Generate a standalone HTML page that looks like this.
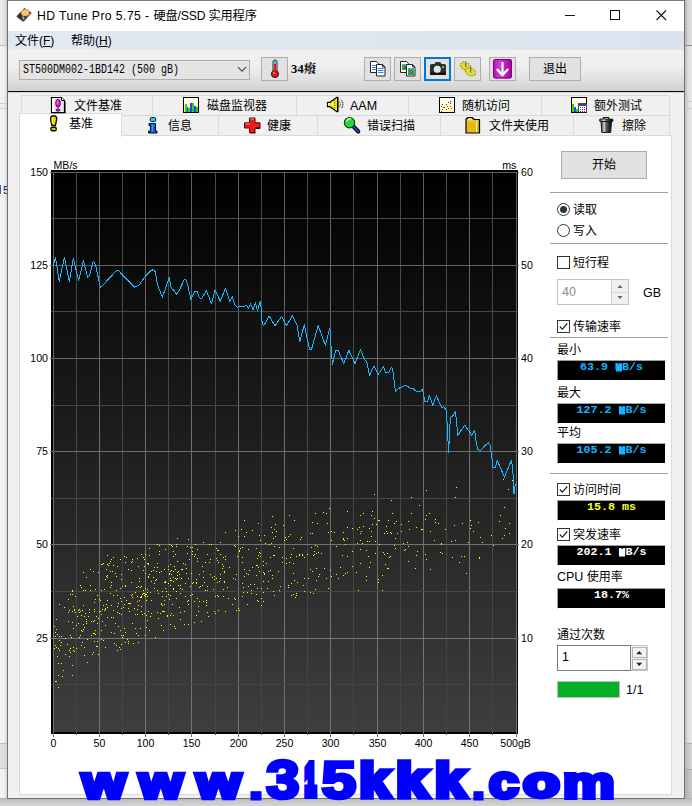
<!DOCTYPE html>
<html lang="zh-CN">
<head>
<meta charset="utf-8">
<title>HD Tune Pro 5.75 - 硬盘/SSD 实用程序</title>
<style>
html,body{margin:0;padding:0;}
body{width:692px;height:806px;overflow:hidden;position:relative;background:#f0f0f0;
  font-family:"Liberation Sans","Noto Sans CJK SC",sans-serif;font-size:12px;color:#000;}
.abs{position:absolute;}
.t{position:absolute;white-space:nowrap;line-height:16px;height:16px;}
/* desktop behind */
#bgL{left:0;top:0;width:8px;height:806px;background:linear-gradient(90deg,#f3f3f3 0,#f0f0f0 4px,#d6d6d6 7px);}
#bgLtop{left:0;top:0;width:8px;height:45px;background:linear-gradient(90deg,#ededed 0,#e6e6e6 4px,#cacaca 7px);border-bottom:1px solid #bdbdbd;}
#bgR{left:685px;top:0;width:7px;height:806px;background:linear-gradient(90deg,#bcbcbc 0,#dcdcdc 3px,#eaeaea 7px);}
#bgRtop{left:685px;top:0;width:7px;height:45px;background:linear-gradient(90deg,#b4b4b4 0,#d2d2d2 3px,#e2e2e2 7px);border-bottom:1px solid #8e8e8e;}
#bgB{left:0;top:798px;width:692px;height:8px;background:linear-gradient(180deg,#b2b2b2 0,#c6c6c6 3px,#d4d4d4 8px);}
/* window */
#win{left:7px;top:0;width:676px;height:797px;border:1px solid #707070;border-top-color:#7a7a7a;background:#f0f0f0;}
#title{left:8px;top:1px;width:676px;height:30px;background:#fff;}
#menu{left:8px;top:31px;width:676px;height:19px;background:linear-gradient(90deg,#e3e9f2,#dbe3ee);}
#tool{left:8px;top:50px;width:676px;height:41px;background:linear-gradient(180deg,#f1f1f1 0,#eeeeee 40%,#dcdcdc 80%,#d0d0d0 100%);}
#toolline{left:8px;top:91px;width:676px;height:1px;background:#0a0a0a;}
#toolline2{left:8px;top:92px;width:676px;height:1px;background:#b9b9b9;opacity:.55}
.btn{position:absolute;box-sizing:border-box;border:1px solid #adadad;background:#e1e1e1;}
#panel{left:19px;top:135px;width:651px;height:658px;background:#fff;border:1px solid #dadada;box-sizing:content-box;}
.tab{position:absolute;box-sizing:border-box;border:1px solid #d9d9d9;border-bottom:none;background:#f0f0f0;}
.sep{position:absolute;height:1px;background:#a0a0a0;left:550px;width:118px;}
.lcd{position:absolute;left:557px;width:109px;height:21px;box-sizing:border-box;border:1px solid #fff;border-top-color:#a0a0a0;border-left-color:#a0a0a0;background:#000;text-align:center;
  font-family:"Liberation Mono","DejaVu Sans Mono",monospace;font-weight:bold;font-size:11.7px;line-height:13px;letter-spacing:0;white-space:nowrap;}
.cb{position:absolute;box-sizing:border-box;width:13px;height:13px;border:1px solid #333;background:#fff;}
.rad{position:absolute;box-sizing:border-box;width:13px;height:13px;border:1px solid #333;border-radius:50%;background:#fff;}
svg text{font-family:"Liberation Sans",sans-serif;}
.mb{background:linear-gradient(currentColor,currentColor) no-repeat 0.5px 3.5px / 6px 7.5px;}
</style>
</head>
<body>
<div class="abs" id="bgL"></div>
<div class="abs" id="bgLtop"></div>
<div class="abs" style="left:0;top:743px;width:7px;height:26px;background:linear-gradient(90deg,#e2e2e2,#d4d4d4);border-top:1px solid #c0c0c0;border-bottom:1px solid #c4c4c4;box-sizing:border-box"></div>
<div class="abs" style="left:0;top:103px;width:7px;height:1px;background:#d0d0d0"></div>
<div class="abs" style="left:0;top:108px;width:7px;height:1px;background:#d0d0d0"></div>
<div class="abs" style="left:0;top:185px;width:1px;height:9px;background:#1a6fd0"></div>
<div class="t" style="left:3px;top:182px;font-size:11px;color:#222;width:4px;overflow:hidden">5</div>
<div class="abs" id="bgR"></div>
<div class="abs" id="bgRtop"></div>
<div class="abs" style="left:685px;top:101px;width:7px;height:1px;background:#cccccc"></div>
<div class="abs" style="left:685px;top:108px;width:7px;height:1px;background:#cccccc"></div>
<div class="abs" style="left:685px;top:743px;width:7px;height:26px;background:linear-gradient(90deg,#b8b8b8,#dadada);border-top:1px solid #b0b0b0;box-sizing:border-box"></div>
<div class="abs" style="left:685px;top:769px;width:7px;height:37px;background:linear-gradient(90deg,#b0b0b0,#cccccc);border-top:1px solid #a8a8a8;box-sizing:border-box"></div>
<div class="abs" id="bgB"></div>
<div class="abs" id="win"></div>
<div class="abs" id="title"></div>
<div class="abs" id="menu"></div>
<div class="abs" id="tool"></div>
<div class="abs" id="toolline"></div>
<div class="abs" id="toolline2"></div>

<!-- title bar -->
<svg class="abs" style="left:15px;top:7px" width="18" height="18" viewBox="0 0 18 18">
 <polygon points="1.700,9 9.500,1 16.300,5.500 8.500,14" fill="#2e2e30"/>
 <polygon points="1.700,9 8.500,14 8.500,15 1.700,10" fill="#18181a"/>
 <polygon points="8.500,14 16.300,5.500 16.300,6.500 8.500,15" fill="#48484a"/>
 <ellipse cx="10.300" cy="5.700" rx="4.300" ry="3.500" fill="#f0a838" transform="rotate(-10 10.300 5.700)"/>
 <ellipse cx="10.300" cy="5.700" rx="2.800" ry="2.200" fill="#fad488" transform="rotate(-10 10.300 5.700)"/>
 <ellipse cx="10.300" cy="5.700" rx="1.200" ry="1" fill="#b8bcc8"/>
 <path d="M7.500 9.500 L9 12.300" stroke="#a8a8a8" stroke-width="1.600"/>
</svg>
<div class="t" style="left:37px;top:8px;font-size:12.2px;letter-spacing:0.1px"><span style="letter-spacing:0.42px">HD Tune Pro 5.75 - </span><span style="letter-spacing:-0.15px">硬盘/SSD 实用程序</span></div>
<svg class="abs" style="left:560px;top:5px" width="112" height="22" viewBox="0 0 112 22" shape-rendering="crispEdges">
 <rect x="5" y="10" width="10" height="1" fill="#111"/>
 <rect x="50.5" y="5.5" width="9" height="9" fill="none" stroke="#111" stroke-width="1"/>
 <path d="M96.5 5.5 L106 15 M106 5.5 L96.5 15" stroke="#111" stroke-width="1.1" shape-rendering="geometricPrecision"/>
</svg>
<!-- menu -->
<div class="t" style="left:15px;top:33px;">文件(<span style="text-decoration:underline">F</span>)</div>
<div class="t" style="left:71px;top:33px;">帮助(<span style="text-decoration:underline">H</span>)</div>

<!-- toolbar -->
<div class="btn" style="left:19px;top:60px;width:231px;height:20px;background:#e4e4e4;"></div>
<div class="t" style="left:23px;top:62px;font-family:'Liberation Mono','DejaVu Sans Mono',monospace;font-size:12px;transform:scaleX(0.8333);transform-origin:0 0;">ST500DM002-1BD142 (500 gB)</div>
<svg class="abs" style="left:236.5px;top:66px" width="10" height="7" viewBox="0 0 10 7"><path d="M1 1.2 L5 5.2 L9 1.2" fill="none" stroke="#444" stroke-width="1.1"/></svg>
<div class="btn" style="left:261px;top:57px;width:27px;height:24px;"></div>
<svg class="abs" style="left:268px;top:59px" width="14" height="20" viewBox="0 0 14 20">
 <rect x="5" y="1" width="4" height="12" rx="2" fill="#e8e8e8" stroke="#222" stroke-width="1"/>
 <rect x="6" y="2" width="2" height="3" fill="#30c8e8"/>
 <rect x="6" y="5" width="2" height="9" fill="#e81010"/>
 <circle cx="7" cy="15" r="3.6" fill="#e81010" stroke="#222" stroke-width="1"/>
 <rect x="6" y="11" width="2" height="3" fill="#e81010"/>
 <circle cx="6" cy="14" r="0.9" fill="#ff9090"/>
</svg>
<div class="t" style="left:291px;top:61px;font-family:'Liberation Serif','Noto Serif CJK SC',serif;font-weight:bold;font-size:12.5px;letter-spacing:0.3px">34<span style="font-size:12px;letter-spacing:0">癈</span></div>

<div class="btn" style="left:364px;top:57px;width:27px;height:24px;"></div>
<div class="btn" style="left:394px;top:57px;width:27px;height:24px;"></div>
<div class="btn" style="left:424px;top:57px;width:27px;height:24px;border:2px solid #0078d7;"></div>
<div class="btn" style="left:454px;top:57px;width:27px;height:24px;"></div>
<div class="btn" style="left:489px;top:57px;width:27px;height:24px;"></div>
<div class="btn" style="left:529px;top:57px;width:52px;height:24px;"></div>
<div class="t" style="left:529px;top:61px;width:52px;text-align:center;font-size:12px">退出</div>
<!-- icon copy text -->
<svg class="abs" style="left:369px;top:60px" width="18" height="18" viewBox="0 0 18 18">
 <path d="M1.5 1.5 h6 l2 2 v9 h-8z" fill="#fff" stroke="#222" stroke-width="1"/>
 <path d="M3 5.5h5M3 7.5h5M3 9.5h5" stroke="#2a7fff" stroke-width="1"/>
 <path d="M7.5 4.500 h6 l2.5 2.500 v9 h-8.500z" fill="#fff" stroke="#222" stroke-width="1"/>
 <path d="M13.500 4.500 v2.500 h2.500" fill="none" stroke="#222" stroke-width="1"/>
 <path d="M9 8.500h5.500M9 10.500h5.500M9 12.500h5.500" stroke="#2a7fff" stroke-width="1"/>
</svg>
<!-- icon copy image -->
<svg class="abs" style="left:399px;top:60px" width="18" height="18" viewBox="0 0 18 18">
 <path d="M1.5 1.500 h6 l2 2 v9 h-8z" fill="#fff" stroke="#222" stroke-width="1"/>
 <rect x="3" y="4" width="5" height="6" fill="#20b040"/><rect x="3" y="4" width="5" height="1.5" fill="#20c8f0"/><circle cx="5.500" cy="7.500" r="1.300" fill="#e82020"/>
 <path d="M7.500 4.500 h6 l2.500 2.500 v9 h-8.500z" fill="#fff" stroke="#222" stroke-width="1"/>
 <path d="M13.500 4.500 v2.500 h2.500" fill="none" stroke="#222" stroke-width="1"/>
 <rect x="9" y="8" width="6" height="7" fill="#20b040"/><rect x="9" y="8" width="6" height="1.500" fill="#20c8f0"/><circle cx="12" cy="11.800" r="1.600" fill="#e82020"/><circle cx="12" cy="11.800" r="0.600" fill="#f0e020"/>
</svg>
<!-- icon camera -->
<svg class="abs" style="left:429px;top:61px" width="18" height="16" viewBox="0 0 18 16">
 <path d="M5.5 3 l1.300-2 h4.400 l1.300 2z" fill="#333"/>
 <rect x="1" y="3" width="16" height="11" rx="1.500" fill="#2e2e2e"/>
 <rect x="1" y="11.500" width="16" height="2.500" rx="1" fill="#111"/>
 <circle cx="8.300" cy="8.300" r="3.500" fill="#fff"/>
 <circle cx="8.300" cy="8.300" r="2.300" fill="#e8e8e8" stroke="#c8c8c8" stroke-width="0.600"/>
 <rect x="13" y="5" width="2.200" height="2.200" fill="#20e050"/>
</svg>
<!-- icon gears -->
<svg class="abs" style="left:459px;top:60px" width="18" height="18" viewBox="0 0 18 18">
 <ellipse cx="6.500" cy="6.200" rx="5.300" ry="3.700" transform="rotate(28 6.500 6.200)" fill="#e8e020" stroke="#8a7e00" stroke-width="1" stroke-dasharray="1.600 1.100"/>
 <ellipse cx="11.500" cy="11.800" rx="5.300" ry="3.700" transform="rotate(28 11.500 11.800)" fill="#e8e020" stroke="#8a7e00" stroke-width="1" stroke-dasharray="1.600 1.100"/>
 <rect x="6" y="1.500" width="1.600" height="5.500" fill="#9aa0a8"/><rect x="6" y="1.500" width="0.800" height="5.500" fill="#5a6068"/>
 <rect x="11" y="7" width="1.600" height="5.500" fill="#9aa0a8"/><rect x="11" y="7" width="0.800" height="5.500" fill="#5a6068"/>
</svg>
<!-- icon save arrow -->
<svg class="abs" style="left:493px;top:59px" width="19" height="20" viewBox="0 0 19 20">
 <defs><linearGradient id="mg" x1="0" y1="0" x2="1" y2="0"><stop offset="0" stop-color="#b010b0"/><stop offset="0.350" stop-color="#d040d0"/><stop offset="1" stop-color="#a000a0"/></linearGradient></defs>
 <rect x="0" y="0" width="19" height="19.500" rx="2.500" fill="url(#mg)"/>
 <rect x="0.500" y="0.500" width="18" height="18.500" rx="2.200" fill="none" stroke="#80007f" stroke-width="1"/>
 <path d="M9.500 3 v11" stroke="#fff" stroke-width="2.200"/>
 <path d="M3.800 10 l5.700 6 l5.700-6" fill="none" stroke="#fff" stroke-width="2.400"/>
</svg>

<!-- tabs -->
<div class="tab" style="left:21px;top:95px;width:132px;height:21px;"></div>
<div class="tab" style="left:152px;top:95px;width:145px;height:21px;"></div>
<div class="tab" style="left:296px;top:95px;width:113px;height:21px;"></div>
<div class="tab" style="left:408px;top:95px;width:134px;height:21px;"></div>
<div class="tab" style="left:541px;top:95px;width:129px;height:21px;"></div>
<div class="tab" style="left:121px;top:115px;width:98px;height:21px;"></div>
<div class="tab" style="left:218px;top:115px;width:100px;height:21px;"></div>
<div class="tab" style="left:317px;top:115px;width:124px;height:21px;"></div>
<div class="tab" style="left:440px;top:115px;width:134px;height:21px;"></div>
<div class="tab" style="left:573px;top:115px;width:97px;height:21px;"></div>
<div class="t" style="left:74px;top:98px;">文件基准</div>
<div class="t" style="left:207px;top:98px;">磁盘监视器</div>
<div class="t" style="left:350px;top:98px;font-size:12.5px">AAM</div>
<div class="t" style="left:462px;top:98px;">随机访问</div>
<div class="t" style="left:594px;top:98px;">额外测试</div>
<div class="t" style="left:168px;top:118px;">信息</div>
<div class="t" style="left:267px;top:118px;">健康</div>
<div class="t" style="left:367px;top:118px;">错误扫描</div>
<div class="t" style="left:489px;top:118px;">文件夹使用</div>
<div class="t" style="left:622px;top:118px;">擦除</div>

<div class="abs" id="panel"></div>
<div class="abs" style="left:19px;top:113px;width:103px;height:24px;background:#fff;border:1px solid #dadada;border-bottom:none;box-sizing:border-box;"></div>
<div class="t" style="left:69px;top:116px;">基准</div>


<!-- chart -->
<svg class="abs" style="left:0;top:0" width="692" height="806" viewBox="0 0 692 806" shape-rendering="crispEdges">
<defs>
<linearGradient id="bgG" x1="0" y1="0" x2="0" y2="1"><stop offset="0" stop-color="#000"/><stop offset="1" stop-color="#3e3e3e"/></linearGradient>
<linearGradient id="gM" x1="0" y1="0" x2="0" y2="1"><stop offset="0" stop-color="#5e5e5e"/><stop offset="0.5" stop-color="#6e6e6e"/><stop offset="1" stop-color="#747474"/></linearGradient>
<linearGradient id="gm" x1="0" y1="0" x2="0" y2="1"><stop offset="0" stop-color="#4a4a4a"/><stop offset="1" stop-color="#454545"/></linearGradient>
</defs>
<rect x="51" y="170" width="467" height="564" fill="#000"/>
<rect x="53" y="172" width="464" height="560" fill="url(#bgG)"/>
<rect x="53" y="172" width="1" height="559" fill="url(#gM)"/>
<rect x="53" y="731" width="1" height="6" fill="#747474"/>
<rect x="76" y="172" width="1" height="559" fill="url(#gm)"/>
<rect x="76" y="731" width="1" height="4" fill="#4a4a4a"/>
<rect x="99" y="172" width="1" height="559" fill="url(#gM)"/>
<rect x="99" y="731" width="1" height="6" fill="#747474"/>
<rect x="122" y="172" width="1" height="559" fill="url(#gm)"/>
<rect x="122" y="731" width="1" height="4" fill="#4a4a4a"/>
<rect x="145" y="172" width="1" height="559" fill="url(#gM)"/>
<rect x="145" y="731" width="1" height="6" fill="#747474"/>
<rect x="168" y="172" width="1" height="559" fill="url(#gm)"/>
<rect x="168" y="731" width="1" height="4" fill="#4a4a4a"/>
<rect x="191" y="172" width="1" height="559" fill="url(#gM)"/>
<rect x="191" y="731" width="1" height="6" fill="#747474"/>
<rect x="215" y="172" width="1" height="559" fill="url(#gm)"/>
<rect x="215" y="731" width="1" height="4" fill="#4a4a4a"/>
<rect x="238" y="172" width="1" height="559" fill="url(#gM)"/>
<rect x="238" y="731" width="1" height="6" fill="#747474"/>
<rect x="261" y="172" width="1" height="559" fill="url(#gm)"/>
<rect x="261" y="731" width="1" height="4" fill="#4a4a4a"/>
<rect x="284" y="172" width="1" height="559" fill="url(#gM)"/>
<rect x="284" y="731" width="1" height="6" fill="#747474"/>
<rect x="307" y="172" width="1" height="559" fill="url(#gm)"/>
<rect x="307" y="731" width="1" height="4" fill="#4a4a4a"/>
<rect x="330" y="172" width="1" height="559" fill="url(#gM)"/>
<rect x="330" y="731" width="1" height="6" fill="#747474"/>
<rect x="353" y="172" width="1" height="559" fill="url(#gm)"/>
<rect x="353" y="731" width="1" height="4" fill="#4a4a4a"/>
<rect x="377" y="172" width="1" height="559" fill="url(#gM)"/>
<rect x="377" y="731" width="1" height="6" fill="#747474"/>
<rect x="400" y="172" width="1" height="559" fill="url(#gm)"/>
<rect x="400" y="731" width="1" height="4" fill="#4a4a4a"/>
<rect x="423" y="172" width="1" height="559" fill="url(#gM)"/>
<rect x="423" y="731" width="1" height="6" fill="#747474"/>
<rect x="446" y="172" width="1" height="559" fill="url(#gm)"/>
<rect x="446" y="731" width="1" height="4" fill="#4a4a4a"/>
<rect x="469" y="172" width="1" height="559" fill="url(#gM)"/>
<rect x="469" y="731" width="1" height="6" fill="#747474"/>
<rect x="492" y="172" width="1" height="559" fill="url(#gm)"/>
<rect x="492" y="731" width="1" height="4" fill="#4a4a4a"/>
<rect x="516" y="172" width="1" height="559" fill="url(#gM)"/>
<rect x="516" y="731" width="1" height="6" fill="#747474"/>
<rect x="50" y="172" width="469" height="1" fill="rgb(94,94,94)"/>
<rect x="51" y="218" width="467" height="1" fill="rgb(73,73,73)"/>
<rect x="50" y="265" width="469" height="1" fill="rgb(99,99,99)"/>
<rect x="51" y="311" width="467" height="1" fill="rgb(72,72,72)"/>
<rect x="50" y="358" width="469" height="1" fill="rgb(104,104,104)"/>
<rect x="51" y="405" width="467" height="1" fill="rgb(71,71,71)"/>
<rect x="50" y="451" width="469" height="1" fill="rgb(109,109,109)"/>
<rect x="51" y="498" width="467" height="1" fill="rgb(71,71,71)"/>
<rect x="50" y="544" width="469" height="1" fill="rgb(114,114,114)"/>
<rect x="51" y="591" width="467" height="1" fill="rgb(70,70,70)"/>
<rect x="50" y="638" width="469" height="1" fill="rgb(116,116,116)"/>
<rect x="51" y="684" width="467" height="1" fill="rgb(69,69,69)"/>
<path d="M203 571h1M288 536h1M111 617h1M75 596h1M137 609h1M83 590h1M199 601h1M187 546h1M124 556h1M199 587h1M82 631h1M185 564h1M81 630h1M261 598h1M182 569h1M124 604h1M56 629h1M366 576h1M238 536h1M211 544h1M122 586h1M269 544h1M128 641h1M304 557h1M375 553h1M206 605h1M395 538h1M67 644h1M222 564h1M93 652h1M274 595h1M388 568h1M357 543h1M435 522h1M247 604h1M285 537h1M422 529h1M204 582h1M312 533h1M263 561h1M174 626h1M110 593h1M468 542h1M155 580h1M438 523h1M144 593h1M207 612h1M102 564h1M114 643h1M123 607h1M81 645h1M93 571h1M210 559h1M104 589h1M188 539h1M141 606h1M347 511h1M172 546h1M363 526h1M175 628h1M218 562h1M147 563h1M64 607h1M123 635h1M118 603h1M374 518h1M280 586h1M84 616h1M282 557h1M90 590h1M316 568h1M188 578h1M466 573h1M178 571h1M493 545h1M378 582h1M56 619h1M55 681h1M326 513h1M186 568h1M77 616h1M186 573h1M174 566h1M131 570h1M155 637h1M143 570h1M244 569h1M83 624h1M154 567h1M456 487h1M272 516h1M104 610h1M308 578h1M113 617h1M86 623h1M331 531h1M273 538h1M196 579h1M173 556h1M369 567h1M149 574h1M156 571h1M140 587h1M121 574h1M78 610h1M140 597h1M207 590h1M218 610h1M272 575h1M407 542h1M180 585h1M56 681h1M170 585h1M334 532h1M90 569h1M176 546h1M260 556h1M360 540h1M146 615h1M288 585h1M101 639h1M73 647h1M261 588h1M154 583h1M148 576h1M198 606h1M101 614h1M129 611h1M315 545h1M222 568h1M129 603h1M95 599h1M185 596h1M145 635h1M79 609h1M434 540h1M138 586h1M111 632h1M72 591h1M343 539h1M256 575h1M265 543h1M258 523h1M290 557h1M117 650h1M143 593h1M130 603h1M430 531h1M175 554h1M132 561h1M220 578h1M102 621h1M176 591h1M258 567h1M360 533h1M115 573h1M219 581h1M116 590h1M176 598h1M169 544h1M164 611h1M146 594h1M135 628h1M57 656h1M158 593h1M177 578h1M176 579h1M163 630h1M164 600h1M196 582h1M103 563h1M394 545h1M84 655h1M149 548h1M345 544h1M249 570h1M68 621h1M302 554h1M147 592h1M139 581h1M153 577h1M343 538h1M94 620h1M162 591h1M352 566h1M132 623h1M164 569h1M125 585h1M141 597h1M144 566h1M268 571h1M248 586h1M263 572h1M344 540h1M243 587h1M72 594h1M293 563h1M151 581h1M80 611h1M216 548h1M297 582h1M114 633h1M313 593h1M270 570h1M177 561h1M55 632h1M358 590h1M415 568h1M59 604h1M214 611h1M441 544h1M310 533h1M121 601h1M57 634h1M227 587h1M70 635h1M409 529h1M286 558h1M200 586h1M72 665h1M192 551h1M368 556h1M101 564h1M356 572h1M173 588h1M79 637h1M260 553h1M244 520h1M369 541h1M386 531h1M93 633h1M171 570h1M91 635h1M223 566h1M247 592h1M315 513h1M196 615h1M55 636h1M73 650h1M180 612h1M214 579h1M162 605h1M171 613h1M161 625h1M274 555h1M314 554h1M103 605h1M63 670h1M175 578h1M171 545h1M84 627h1M261 605h1M72 611h1M440 552h1M508 489h1M366 550h1M203 542h1M164 582h1M464 556h1M263 592h1M120 559h1M121 579h1M179 574h1M107 564h1M151 571h1M99 611h1M61 642h1M317 523h1M145 554h1M180 593h1M323 512h1M387 568h1M61 663h1M223 557h1M294 580h1M202 566h1M282 562h1M138 566h1M98 618h1M378 579h1M111 582h1M122 637h1M296 595h1M165 581h1M445 529h1M169 599h1M86 621h1M462 523h1M170 580h1M195 544h1M291 554h1M111 585h1M166 591h1M147 589h1M270 557h1M59 636h1M190 595h1M233 578h1M125 586h1M113 557h1M318 576h1M229 567h1M234 598h1M259 571h1M59 640h1M293 573h1M328 588h1M100 600h1M278 571h1M133 643h1M105 625h1M126 600h1M138 605h1M347 538h1M372 524h1M362 543h1M244 536h1M100 611h1M426 490h1M132 559h1M215 596h1M257 600h1M194 622h1M166 596h1M419 505h1M313 555h1M84 647h1M142 594h1M379 520h1M425 519h1M159 554h1M224 572h1M304 578h1M316 553h1M360 549h1M191 573h1M451 541h1M244 576h1M138 635h1M73 606h1M197 549h1M384 533h1M54 648h1M105 579h1M94 602h1M184 624h1M263 581h1M482 542h1M169 573h1M197 598h1M165 582h1M192 547h1M405 549h1M107 575h1M106 604h1M87 662h1M314 551h1M304 591h1M170 615h1M140 628h1M139 578h1M224 581h1M284 540h1M371 536h1M72 590h1M185 583h1M256 594h1M190 547h1M82 642h1M352 528h1M141 596h1M246 573h1M137 601h1M299 554h1M318 552h1M242 562h1M107 617h1M411 513h1M328 532h1M131 582h1M435 519h1M387 553h1M171 580h1M106 569h1M310 569h1M491 535h1M70 652h1M273 591h1M336 574h1M132 594h1M217 550h1M75 612h1M70 648h1M347 527h1M194 601h1M216 558h1M276 531h1M259 535h1M91 621h1M454 525h1M173 581h1M146 627h1M331 576h1M117 606h1M205 590h1M210 574h1M330 570h1M80 585h1M408 561h1M207 554h1M263 565h1M58 648h1M159 551h1M310 592h1M136 587h1M347 572h1M471 525h1M82 610h1M343 532h1M192 554h1M177 575h1M128 608h1M461 556h1M452 557h1M65 638h1M369 528h1M69 656h1M161 603h1M110 571h1M370 562h1M217 582h1M391 500h1M242 583h1M201 621h1M243 592h1M336 546h1M473 531h1M502 538h1M162 611h1M235 579h1M157 567h1M274 529h1M296 556h1M74 651h1M125 562h1M294 520h1M404 550h1M164 569h1M147 592h1M165 549h1M147 620h1M74 610h1M242 596h1M142 614h1M206 600h1M403 543h1M257 565h1M73 628h1M108 565h1M95 630h1M79 612h1M121 614h1M198 611h1M248 549h1M147 596h1M279 547h1M78 623h1M203 601h1M81 615h1M137 601h1M190 586h1M98 654h1M173 571h1M161 571h1M442 553h1M69 610h1M252 530h1M188 604h1M97 646h1M95 589h1M159 545h1M357 529h1M396 521h1M329 508h1M352 551h1M360 515h1M275 524h1M283 525h1M301 537h1M165 588h1M372 511h1M293 548h1M83 629h1M479 558h1M95 634h1M213 589h1M347 556h1M97 641h1M116 645h1M326 578h1M192 583h1M170 571h1M94 633h1M56 647h1M209 562h1M189 559h1M110 561h1M179 607h1M236 610h1M141 554h1M135 592h1M216 578h1M89 609h1M227 587h1M80 635h1M70 594h1M121 608h1M183 563h1M182 589h1M214 576h1M394 523h1M197 558h1M236 574h1M124 597h1M401 524h1M187 553h1M176 544h1M426 515h1M212 577h1M470 520h1M240 548h1M441 543h1M115 623h1M85 590h1M376 524h1M181 578h1M72 622h1M316 580h1M68 612h1M238 608h1M509 523h1M264 535h1M144 595h1M378 520h1M83 572h1M345 573h1M74 609h1M264 574h1M113 610h1M170 624h1M116 576h1M58 663h1M300 539h1M149 630h1M327 523h1M257 558h1M383 552h1M119 613h1M235 599h1M72 675h1M76 648h1M125 632h1M426 559h1M55 645h1M90 585h1M65 654h1M149 555h1M217 595h1M101 590h1M408 546h1M264 573h1M384 554h1M459 562h1M170 564h1M180 588h1M206 602h1M299 555h1M499 521h1M500 515h1M135 614h1M401 531h1M194 556h1M371 515h1M390 532h1M158 618h1M59 650h1M99 599h1M157 544h1M387 533h1M168 566h1M157 563h1M455 540h1M68 599h1M275 536h1M85 613h1M87 639h1M105 609h1M92 654h1M88 616h1M137 614h1M302 555h1M121 644h1M138 605h1M154 588h1M367 541h1M340 567h1M242 547h1M54 626h1M117 566h1M117 612h1M162 596h1M178 585h1M188 624h1M290 534h1M89 612h1M223 589h1M58 687h1M416 527h1M113 565h1M248 574h1M218 550h1M128 643h1M144 613h1M145 596h1M86 577h1M160 613h1M107 600h1M246 532h1M175 569h1M312 522h1M385 564h1M324 568h1M161 604h1M143 557h1M173 589h1M388 520h1M148 563h1M197 561h1M291 595h1M145 594h1M411 497h1M170 595h1M225 611h1M102 609h1M113 595h1M256 565h1M408 521h1M132 623h1M111 605h1M187 601h1M143 557h1M168 583h1M134 608h1M319 574h1M177 572h1M105 647h1M167 615h1M171 574h1M303 585h1M118 626h1M76 625h1M455 497h1M421 529h1M103 640h1M361 531h1M375 541h1M252 567h1M218 596h1M254 584h1M193 582h1M120 649h1M139 600h1M150 592h1M120 630h1M173 577h1M97 595h1M163 611h1M382 575h1M94 641h1M266 563h1M128 569h1M143 590h1M271 527h1M217 560h1M124 628h1M239 550h1M121 635h1M366 580h1M138 642h1M203 577h1M215 613h1M207 586h1M225 559h1M181 569h1M81 587h1M479 557h1M232 604h1M504 507h1M106 576h1M234 545h1M379 544h1M69 650h1M331 540h1M120 588h1M291 583h1M338 578h1M371 531h1M279 590h1M94 611h1M389 557h1M153 570h1M251 593h1M109 563h1M395 548h1M430 569h1M268 581h1M117 595h1M416 555h1M258 601h1M397 533h1M480 537h1M131 595h1M223 596h1M119 647h1M199 574h1M220 554h1M503 479h1M288 587h1M55 636h1M58 675h1M137 558h1M241 529h1M105 608h1M128 603h1M172 604h1M286 563h1M61 636h1M274 546h1M263 601h1M86 619h1M167 616h1M131 562h1M126 557h1M101 630h1M359 527h1M94 609h1M239 551h1M478 522h1M272 578h1M504 535h1M202 585h1M382 590h1M96 646h1M107 577h1M145 588h1M157 590h1M360 563h1M293 594h1M188 600h1M391 533h1M220 574h1M374 494h1M425 554h1M224 571h1M256 548h1M127 639h1M251 590h1M237 556h1M225 556h1M141 611h1M146 600h1M71 637h1M110 587h1M470 528h1M228 598h1M509 533h1M307 554h1M512 480h1M224 582h1M132 597h1M151 600h1M93 621h1M205 562h1M220 542h1M260 540h1M392 513h1M272 532h1M173 551h1M289 562h1M196 583h1M317 546h1M103 563h1M390 556h1M148 564h1M342 555h1M184 611h1M96 616h1M120 598h1M145 573h1M168 594h1M289 515h1M151 613h1M296 593h1M417 551h1M97 623h1M321 553h1M343 575h1M141 586h1M156 579h1M273 555h1M62 676h1M195 554h1M225 532h1M125 642h1M169 574h1M267 588h1M157 612h1M150 616h1M235 530h1M257 588h1M136 633h1M312 571h1M505 528h1M271 543h1M148 611h1M258 555h1M107 555h1M137 596h1M295 597h1M159 572h1M235 546h1M148 577h1M164 604h1M83 605h1M112 571h1M144 559h1M170 578h1M242 557h1M386 526h1M192 594h1M107 607h1M180 619h1M173 615h1M311 547h1M98 572h1M371 515h1M250 584h1M239 610h1M198 606h1M363 513h1M209 544h1M177 538h1M60 645h1M286 539h1M111 559h1M429 513h1M315 589h1M208 616h1M259 552h1M168 569h1" stroke="#ffff00" stroke-width="1" fill="none" transform="translate(0,0.5)"/>
<polyline points="53.1,265.7 55.5,257.3 59.2,281.6 64.4,257.3 69.4,281.6 73.4,258.2 78.6,280.7 83.5,260.5 87.6,277.3 89.9,274.7 93.3,261.2 95.4,264.3 100.3,287.2 102.0,286.0 115.9,271.2 118.1,270.3 129.8,282.5 134.6,287.2 139.3,284.7 144.5,277.3 150.6,270.9 153.7,269.5 155.4,272.1 157.5,285.1 162.4,297.2 169.2,277.7 171.3,288.5 173.5,289.9 176.5,294.2 179.1,290.7 184.3,279.5 186.0,279.8 187.7,284.7 190.9,299.4 194.7,291.6 197.3,291.6 199.0,297.2 201.3,298.9 206.5,290.7 211.5,303.8 215.1,289.9 220.3,301.2 225.4,288.5 229.7,301.2 232.3,296.5 235.4,305.8 237.5,307.2 239.8,306.4 244.1,306.4 246.7,305.5 248.4,309.0 250.5,303.4 253.1,309.8 255.4,302.5 257.6,311.0 259.2,304.6 260.6,301.2 262.3,324.6 264.0,325.4 269.2,316.2 275.0,326.0 281.6,316.4 286.5,325.5 292.5,315.7 296.9,324.7 299.8,341.2 304.3,324.7 309.5,349.5 311.6,349.0 318.2,325.5 325.5,345.5 329.8,328.1 330.7,342.0 332.4,364.6 335.5,350.7 338.5,351.0 343.7,363.7 348.9,350.3 355.0,363.7 360.5,349.5 364.3,359.1 366.9,362.5 369.5,375.5 373.9,366.0 378.2,374.3 383.4,366.9 386.0,372.9 388.6,372.9 391.2,367.7 392.6,368.6 395.5,391.7 399.0,388.2 406.0,385.1 410.3,388.2 412.9,388.6 416.4,391.5 420.7,391.2 422.4,389.1 425.0,401.6 427.6,401.0 429.4,395.1 432.8,405.5 436.3,395.8 441.5,407.3 443.6,406.8 446.4,410.2 448.6,452.4 450.3,417.7 452.9,415.7 455.5,411.2 457.8,435.4 464.7,425.2 472.0,435.4 474.6,430.2 476.4,443.8 478.1,449.8 480.7,450.3 485.9,444.6 488.5,442.9 490.2,445.5 492.0,459.4 492.8,467.5 495.4,467.2 497.2,460.2 504.4,477.2 511.4,460.2 512.8,469.8 514.0,494.0 515.0,486.2 516.6,482.8" fill="none" stroke="#1ab8ff" stroke-width="1" shape-rendering="crispEdges" stroke-linejoin="round"/>
<g font-size="10.6" fill="#000" shape-rendering="geometricPrecision">
<text x="48" y="175.5" text-anchor="end">150</text>
<text x="48" y="268.5" text-anchor="end">125</text>
<text x="48" y="361.5" text-anchor="end">100</text>
<text x="48" y="454.5" text-anchor="end">75</text>
<text x="48" y="547.5" text-anchor="end">50</text>
<text x="48" y="641.5" text-anchor="end">25</text>
<text x="521" y="175.5">60</text>
<text x="521" y="268.5">50</text>
<text x="521" y="361.5">40</text>
<text x="521" y="454.5">30</text>
<text x="521" y="547.5">20</text>
<text x="521" y="641.5">10</text>
<text x="53.5" y="747" text-anchor="middle">0</text>
<text x="99.5" y="747" text-anchor="middle">50</text>
<text x="145.5" y="747" text-anchor="middle">100</text>
<text x="191.5" y="747" text-anchor="middle">150</text>
<text x="238.5" y="747" text-anchor="middle">200</text>
<text x="284.5" y="747" text-anchor="middle">250</text>
<text x="330.5" y="747" text-anchor="middle">300</text>
<text x="377.5" y="747" text-anchor="middle">350</text>
<text x="423.5" y="747" text-anchor="middle">400</text>
<text x="469.5" y="747" text-anchor="middle">450</text>
<text x="500.3" y="747">500gB</text>
<text x="53.5" y="169">MB/s</text>
<text x="502.2" y="169">ms</text>
</g>
</svg>

<!-- tab icons -->
<svg class="abs" style="left:0;top:94px" width="692" height="42" viewBox="0 94 692 42">
<!-- file benchmark -->
<path d="M51.500 97.500 h10 l3 3 v12 h-13z" fill="#e6e6e6" stroke="#000" stroke-width="1.200" stroke-linejoin="miter"/>
<path d="M61.500 97.500 v3 h3" fill="#fff" stroke="#000" stroke-width="1"/>
<rect x="52.200" y="98.200" width="2" height="13.600" fill="#fff"/>
<rect x="64" y="101" width="1.500" height="12" fill="#000"/>
<rect x="51" y="112" width="14.500" height="1.300" fill="#000"/>
<ellipse cx="58" cy="103.300" rx="2.300" ry="4" fill="#e010e0" stroke="#300030" stroke-width="0.800"/>
<ellipse cx="57.600" cy="102.500" rx="1" ry="2.200" fill="#ff60ff"/>
<ellipse cx="58" cy="110" rx="1.900" ry="1.300" fill="#e010e0" stroke="#300030" stroke-width="0.700"/>
<!-- benchmark yellow ! -->
<path d="M53.600 115.700 c-2.200 0 -3.200 1.600 -3 3.600 l1.300 6.200 h3.500 l1.300-6.200 c0.200-2 -0.800-3.600 -3.100-3.600z" fill="#e6dc00" stroke="#101000" stroke-width="1.400"/>
<path d="M52.300 117.500 v6" stroke="#fffb80" stroke-width="1"/>
<rect x="51" y="127.300" width="5.200" height="3.400" rx="1.200" fill="#d8cc00" stroke="#101000" stroke-width="1.400"/>
<!-- disk monitor -->
<g shape-rendering="crispEdges">
<rect x="183.500" y="97.500" width="15" height="15" fill="#ffffc8" stroke="#000" stroke-width="1.300"/>
<rect x="184" y="98" width="14" height="4" fill="#fffff0"/>
<path d="M184.500 112 v-8 h2 v3 h1.500 v1 h2 v-4 h2 v-1 h1.500 v3 h2 v1 h2.500 v5z" fill="#18e018"/>
<rect x="186.500" y="107" width="1.500" height="5" fill="#3838ff"/>
<rect x="190" y="103" width="1.500" height="9" fill="#3838ff"/>
<rect x="194" y="106" width="1.500" height="6" fill="#3838ff"/>
</g>
<!-- info i -->
<rect x="150.300" y="117.500" width="5.400" height="4" rx="1.300" fill="#20c8ff" stroke="#001030" stroke-width="1"/>
<path d="M149 123.500 h6.500 v7.500 h1.500 v2 h-8.500 v-2 h2 v-5.500 h-1.500z" fill="#1060f0" stroke="#000820" stroke-width="1"/>
<path d="M152.300 124.500 v7" stroke="#40a0ff" stroke-width="1.200"/>
<!-- health cross -->
<path d="M249.500 118 h5.500 v4.800 h5 v5.200 h-5 v4.500 h-5.500 v-4.500 h-5 v-5.200 h5z" fill="#e81c1c" stroke="#5a0000" stroke-width="1"/>
<path d="M250.500 119 h3.500 M245.500 123.800 h4.500" stroke="#ff8a8a" stroke-width="1"/>
<path d="M255.500 132.800 h-5.500 M260.300 128.300 h-4.500" stroke="#400000" stroke-width="1.200"/>
<!-- AAM speaker -->
<path d="M327.500 102.300 h2.500 l7-5 h0.800 v14.400 h-0.800 l-7-5 h-2.500z" fill="#f0e800" stroke="#000" stroke-width="1.200" stroke-linejoin="round"/>
<path d="M334.600 99.500 v9.800" stroke="#555" stroke-width="0.700" stroke-dasharray="1.500 1"/>
<rect x="337" y="97.300" width="1.300" height="14.400" fill="#000"/>
<ellipse cx="328.600" cy="104.300" rx="0.700" ry="1.500" fill="#fff8a0"/>
<path d="M331.500 103 l2-1.200 v5 l-2-1.200z" fill="#fffbb0"/>
<path d="M339.500 101.700 q1.800 2.600 0 5.200 M341.300 99.800 q3.300 4.500 0 9" fill="none" stroke="#111" stroke-width="1" stroke-dasharray="1.600 0.700"/>
<!-- random access -->
<g shape-rendering="crispEdges">
<rect x="439.500" y="97.500" width="15" height="15" fill="#ffffc8" stroke="#000" stroke-width="1.300"/>
<rect x="440" y="98" width="14" height="4" fill="#fffff0"/>
<g fill="#2020ff"><rect x="442" y="104" width="1" height="1"/><rect x="441" y="106" width="1" height="1"/><rect x="444" y="107" width="1" height="1"/><rect x="446" y="104" width="1" height="1"/><rect x="448" y="102" width="1" height="1"/><rect x="450" y="101" width="1" height="1"/><rect x="450" y="103" width="1" height="1"/></g>
<g fill="#ff1010"><rect x="441" y="111" width="1" height="1"/><rect x="442" y="109" width="1" height="1"/><rect x="443" y="107" width="1" height="1"/><rect x="446" y="109" width="1" height="1"/><rect x="447" y="106" width="1" height="1"/><rect x="448" y="108" width="1" height="1"/><rect x="450" y="106" width="1" height="1"/><rect x="451" y="108" width="1" height="1"/></g>
</g>
<!-- error scan magnifier -->
<path d="M353.500 126.500 l4.800 5" stroke="#000" stroke-width="4" stroke-linecap="round"/>
<path d="M353.500 126.500 l4.500 4.700" stroke="#2040e0" stroke-width="2.200" stroke-linecap="round"/>
<circle cx="349.500" cy="122.700" r="5.200" fill="#28d838" stroke="#084010" stroke-width="1.100"/>
<path d="M346.300 121.500 q1.500-3 4.500-3" stroke="#b0ffb8" stroke-width="1.300" fill="none"/>
<!-- folder -->
<path d="M466 133 v-13.500 l1.800-2 h4.400 l1.800 2 h5.500 v13.500z" fill="#e8c820" stroke="#000" stroke-width="1.200" stroke-linejoin="round"/>
<path d="M467.200 120.300 l1.200-1.500 h3.300 l1.300 1.500" fill="#fff070" stroke="none"/>
<rect x="467" y="121.500" width="9" height="10.500" fill="#e0b818"/>
<rect x="476" y="121.500" width="1.500" height="10.500" fill="#fff8a0"/>
<rect x="477.500" y="121.500" width="1.500" height="10.500" fill="#c09810"/>
<!-- extra tests -->
<g shape-rendering="crispEdges">
<rect x="571.500" y="97.500" width="15" height="15" fill="#ffffc8" stroke="#000" stroke-width="1.300"/>
<rect x="572" y="98" width="14" height="4" fill="#fffff0"/>
<rect x="572.300" y="104" width="2" height="8" fill="#18e018"/>
<rect x="574.300" y="107" width="2" height="5" fill="#3838ff"/>
<rect x="576.300" y="109" width="1.500" height="3" fill="#18e018"/>
<rect x="578" y="103.500" width="8.500" height="8.500" fill="#fff" stroke="#202020" stroke-width="0.800"/>
<rect x="578.500" y="104" width="7.500" height="1.800" fill="#2838e8"/>
<g fill="#ff1010"><rect x="580" y="107" width="1" height="1"/><rect x="582" y="107" width="1" height="1"/><rect x="580" y="109" width="1" height="1"/><rect x="584" y="110.500" width="1" height="1"/></g>
<g fill="#2020ff"><rect x="584" y="107" width="1" height="1"/><rect x="582" y="109" width="1" height="1"/><rect x="584" y="109" width="1" height="1"/><rect x="580" y="110.500" width="1" height="1"/><rect x="582" y="110.500" width="1" height="1"/></g>
</g>
<!-- trash -->
<defs><linearGradient id="tr" x1="0" y1="0" x2="1" y2="0"><stop offset="0" stop-color="#1a1a1a"/><stop offset="0.300" stop-color="#d8d8d8"/><stop offset="0.450" stop-color="#707070"/><stop offset="0.750" stop-color="#2a2a2a"/><stop offset="1" stop-color="#111"/></linearGradient></defs>
<path d="M603.500 119 v-1.500 h5 v1.500" fill="none" stroke="#111" stroke-width="1.200"/>
<rect x="599.500" y="119" width="13.500" height="2.500" rx="0.800" fill="url(#tr)" stroke="#111" stroke-width="0.800"/>
<path d="M601 121.500 h10.500 l-0.800 11 h-8.900z" fill="url(#tr)" stroke="#111" stroke-width="0.900"/>
</svg>
<!-- right panel -->
<div class="btn" style="left:561px;top:151px;width:86px;height:28px;"></div>
<div class="t" style="left:561px;top:157px;width:86px;text-align:center;">开始</div>
<div class="sep" style="top:192px"></div>
<div class="rad" style="left:557px;top:203px;"></div>
<div class="abs" style="left:560px;top:206px;width:7px;height:7px;border-radius:50%;background:#333;"></div>
<div class="t" style="left:573px;top:202px;">读取</div>
<div class="rad" style="left:557px;top:224px;"></div>
<div class="t" style="left:573px;top:223px;">写入</div>
<div class="sep" style="top:243px"></div>
<div class="cb" style="left:557px;top:256px;"></div>
<div class="t" style="left:573px;top:255px;">短行程</div>
<div class="abs" style="left:557px;top:279px;width:72px;height:26px;box-sizing:border-box;border:1px solid #c4c4c4;background:#fff;"></div>
<div class="t" style="left:562px;top:284px;color:#8a8a8a;font-size:12.5px">40</div>
<div class="abs" style="left:611px;top:280px;width:17px;height:24px;background:#f0f0f0;border-left:1px solid #d0d0d0;box-sizing:border-box;"></div>
<div class="abs" style="left:612px;top:292px;width:16px;height:1px;background:#d8d8d8;"></div>
<svg class="abs" style="left:612px;top:280px" width="16" height="24" viewBox="0 0 16 24"><path d="M5.500 8 l2.500-3 l2.500 3z M5.500 16 l2.500 3 l2.500-3z" fill="#606060"/></svg>
<div class="t" style="left:643px;top:285px;font-size:12.5px">GB</div>
<div class="cb" style="left:557px;top:320px;"></div>
<svg class="abs" style="left:557px;top:320px" width="13" height="13" viewBox="0 0 13 13"><path d="M2.800 6.500 L5.300 9.200 L10.300 3.500" fill="none" stroke="#222" stroke-width="1.150"/></svg>
<div class="t" style="left:573px;top:319px;">传输速率</div>
<div class="sep" style="top:337px"></div>
<div class="t" style="left:557px;top:342px;">最小</div>
<div class="lcd" style="top:360px;color:#16b4ff;">63.9 <span class="mb">M</span>B/s</div>
<div class="t" style="left:557px;top:385px;">最大</div>
<div class="lcd" style="top:403px;color:#16b4ff;">127.2 <span class="mb">M</span>B/s</div>
<div class="t" style="left:557px;top:425px;">平均</div>
<div class="lcd" style="top:443px;color:#16b4ff;">105.2 <span class="mb">M</span>B/s</div>
<div class="sep" style="top:473px"></div>
<div class="cb" style="left:557px;top:483px;"></div>
<svg class="abs" style="left:557px;top:483px" width="13" height="13" viewBox="0 0 13 13"><path d="M2.800 6.500 L5.300 9.200 L10.300 3.500" fill="none" stroke="#222" stroke-width="1.150"/></svg>
<div class="t" style="left:573px;top:482px;">访问时间</div>
<div class="lcd" style="top:500px;color:#ffff20;">15.8 ms</div>
<div class="cb" style="left:557px;top:528px;"></div>
<svg class="abs" style="left:557px;top:528px" width="13" height="13" viewBox="0 0 13 13"><path d="M2.800 6.500 L5.300 9.200 L10.300 3.500" fill="none" stroke="#222" stroke-width="1.150"/></svg>
<div class="t" style="left:573px;top:527px;">突发速率</div>
<div class="lcd" style="top:545px;color:#fff;">202.1 <span class="mb">M</span>B/s</div>
<div class="t" style="left:557px;top:569px;"><span style="font-size:12.500px">CPU</span> 使用率</div>
<div class="lcd" style="top:588px;color:#fff;">18.7%</div>
<div class="t" style="left:557px;top:627px;">通过次数</div>
<div class="abs" style="left:557px;top:645px;width:91px;height:26px;box-sizing:border-box;border:1px solid #c8c8c8;background:#f0f0f0;"></div>
<div class="abs" style="left:557px;top:645px;width:74px;height:26px;box-sizing:border-box;border:1px solid #7a7a7a;background:#fff;"></div>
<div class="t" style="left:562px;top:649px;font-size:12.500px">1</div>
<div class="abs" style="left:632px;top:647px;width:15px;height:11px;box-sizing:border-box;border:1px solid #b4b4b4;background:#f3f3f3;"></div>
<div class="abs" style="left:632px;top:659px;width:15px;height:11px;box-sizing:border-box;border:1px solid #b4b4b4;background:#f3f3f3;"></div>
<svg class="abs" style="left:631px;top:646px" width="16" height="24" viewBox="0 0 16 24"><path d="M5.200 8.300 l3-3.300 l3 3.300z M5.200 16.700 l3 3.300 l3-3.300z" fill="#222"/></svg>
<div class="abs" style="left:557px;top:681px;width:63px;height:17px;box-sizing:border-box;border:1px solid #bcbcbc;background:#06b025;"></div>
<div class="t" style="left:626px;top:682px;font-size:12.500px">1/1</div>

<!-- watermark -->
<svg class="abs" style="left:0;top:740px" width="692" height="66" viewBox="0 740 692 66"><g font-family="Liberation Sans, sans-serif" font-weight="bold" font-size="50" fill="#0000ff" stroke="#0000ff"><text transform="translate(82.33,797.73) scale(1.111,0.887)" stroke-width="5.2">w</text><text transform="translate(139.33,797.73) scale(1.111,0.887)" stroke-width="5.2">w</text><text transform="translate(196.40,797.73) scale(1.133,0.887)" stroke-width="5.2">w</text><text transform="translate(246.57,799.50) scale(1.375,1.125)" stroke-width="1">.</text><text transform="translate(266.30,798.13) scale(1.197,1.085)" stroke-width="3.4">3</text><text transform="translate(305.21,794.46) scale(0.371,0.840)" stroke-width="12">1</text><text transform="translate(321.50,798.21) scale(1.250,1.046)" stroke-width="3.4">5</text><text transform="translate(359.41,796.63) scale(1.094,0.957)" stroke-width="5.5">k</text><text transform="translate(396.36,796.63) scale(1.141,0.957)" stroke-width="5.5">k</text><text transform="translate(434.89,796.63) scale(1.106,0.957)" stroke-width="5.5">k</text><text transform="translate(469.71,799.50) scale(1.263,1.125)" stroke-width="1">.</text><text transform="translate(489.07,798.16) scale(1.067,0.919)" stroke-width="5">c</text><text transform="translate(523.19,797.41) scale(1.188,0.864)" stroke-width="5.5">o</text><text transform="translate(562.83,797.73) scale(1.170,0.887)" stroke-width="4.6">m</text></g></svg>
</body>
</html>
